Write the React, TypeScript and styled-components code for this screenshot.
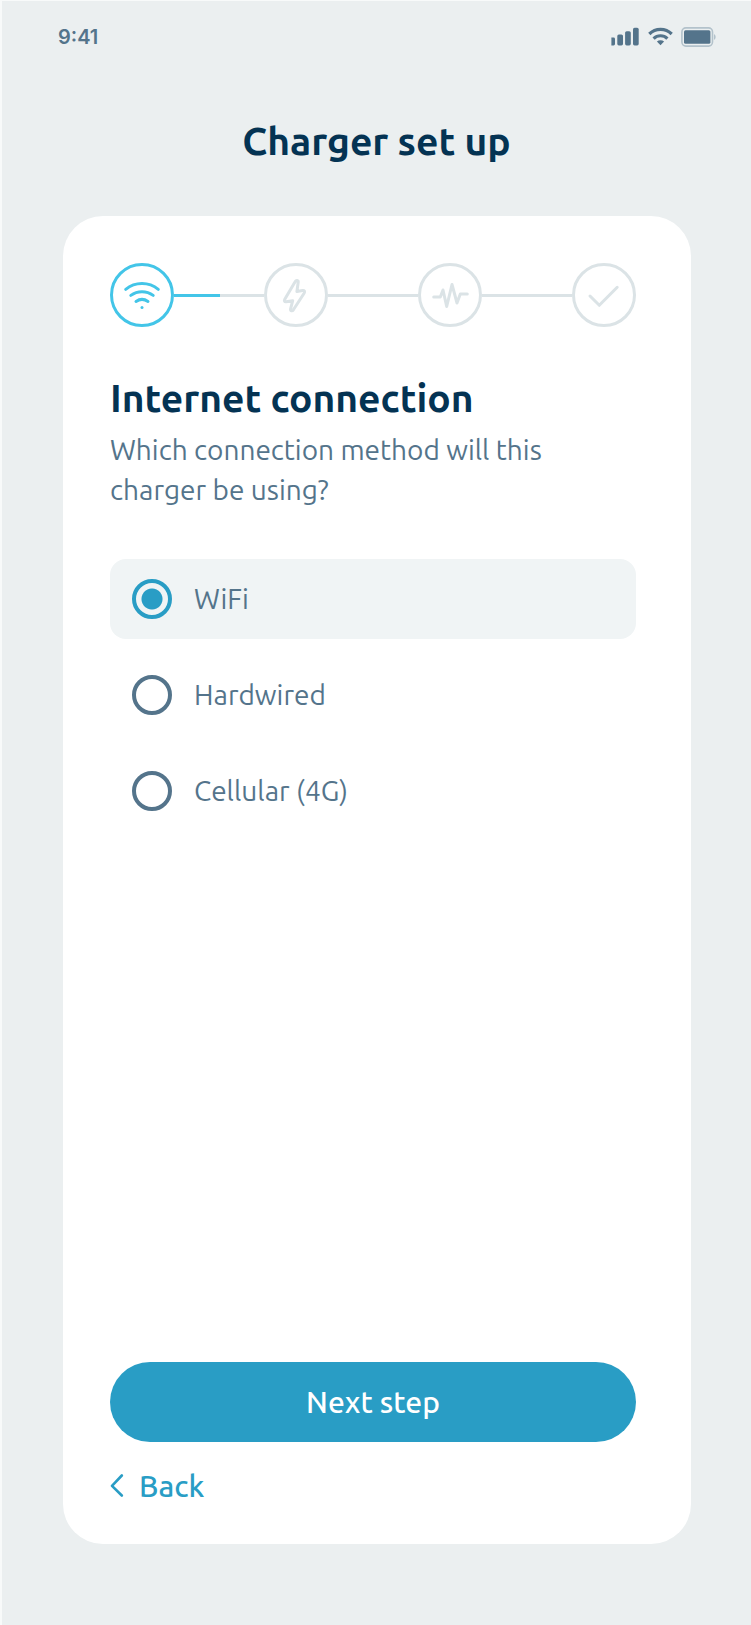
import React, { useState } from 'react';
import styled, { createGlobalStyle } from 'styled-components';

const color = {
  page: '#ebeff0',
  edge: '#f8fafa',
  card: '#ffffff',
  navy: '#043353',
  slate: '#54748b',
  blue: '#299dc5',
  cyan: '#43c5e8',
  line: '#dbe3e6',
  option: '#f0f4f5',
};

const GlobalStyle = createGlobalStyle`
  *, *::before, *::after { box-sizing: border-box; }
  body {
    margin: 0;
    background: ${color.page};
    color: ${color.slate};
    font-family: Ubuntu, "Noto Sans", sans-serif;
  }
`;

const Page = styled.div`
  display: flex;
  flex-direction: column;
  min-height: 100vh;
  padding-bottom: 81px;
  border-top: 1px solid ${color.edge};
  border-left: 2px solid ${color.edge};
`;

const StatusBar = styled.header`
  display: flex;
  align-items: center;
  justify-content: space-between;
  height: 72px;
  padding: 0 34px 0 56px;
`;

const Time = styled.time`
  font-family: Inter, sans-serif;
  font-size: 20px;
  font-weight: 600;
  line-height: 24px;
`;

const StatusIcons = styled.div`
  display: flex;
  align-items: center;
  gap: 8px;

  svg { display: block; }
`;

const Title = styled.h1`
  margin: 44px 0 51px;
  color: ${color.navy};
  font-size: 39px;
  font-weight: 700;
  line-height: 48px;
  text-align: center;
`;

const Card = styled.main`
  display: flex;
  flex: 1;
  flex-direction: column;
  margin: 0 60px 0 61px;
  padding: 47px 55px 38px 47px;
  border-radius: 40px;
  background: ${color.card};
`;

const Stepper = styled.ol`
  display: flex;
  align-items: center;
  margin: 0 0 47px;
  padding: 0;
  list-style: none;
`;

const Step = styled.li<{ $last?: boolean }>`
  display: flex;
  flex: ${(p) => (p.$last ? 'none' : '1 1 0')};
  align-items: center;
`;

const StepCircle = styled.span<{ $active?: boolean }>`
  flex: none;
  width: 64px;
  height: 64px;
  border: 3px solid currentColor;
  border-radius: 50%;
  color: ${(p) => (p.$active ? color.cyan : color.line)};

  svg { display: block; margin: -3px; }
`;

const Connector = styled.span<{ $half?: boolean }>`
  flex: 1;
  height: 3px;
  background: ${(p) =>
    p.$half ? `linear-gradient(90deg, ${color.cyan} 51%, ${color.line} 51%)` : color.line};
`;

const Heading = styled.h2`
  margin: 0 0 8px;
  color: ${color.navy};
  font-size: 39px;
  font-weight: 700;
  line-height: 48px;
`;

const Description = styled.p`
  margin: 0;
  padding-right: 16px;
  font-size: 28px;
  line-height: 40px;
`;

const Options = styled.fieldset`
  display: flex;
  flex-direction: column;
  gap: 16px;
  min-width: 0;
  margin: 49px 0 40px;
  padding: 0;
  border: 0;
`;

const Option = styled.label<{ $selected: boolean }>`
  display: flex;
  align-items: center;
  gap: 22px;
  height: 80px;
  padding: 0 22px;
  border-radius: 16px;
  background: ${(p) => (p.$selected ? color.option : 'transparent')};
  font-size: 28px;
  line-height: 40px;
  cursor: pointer;
`;

const Radio = styled.input`
  appearance: none;
  flex: none;
  width: 40px;
  height: 40px;
  margin: 0;
  border: 4px solid ${color.slate};
  border-radius: 50%;
  cursor: pointer;

  &:checked {
    border-color: ${color.blue};
    background: radial-gradient(circle, ${color.blue} 10px, transparent 11px);
  }
`;

const Actions = styled.div`
  display: flex;
  flex-direction: column;
  align-items: flex-start;
  gap: 24px;
  margin-top: auto;
`;

const NextButton = styled.button`
  width: 100%;
  height: 80px;
  border: 0;
  border-radius: 40px;
  background: ${color.blue};
  color: #ffffff;
  font: 500 30px/40px Ubuntu, "Noto Sans", sans-serif;
  cursor: pointer;
`;

const BackButton = styled.button`
  display: flex;
  align-items: center;
  gap: 14px;
  padding: 0;
  border: 0;
  background: none;
  color: ${color.blue};
  font: 500 30px/40px Ubuntu, "Noto Sans", sans-serif;
  cursor: pointer;
`;

const SignalIcon = () => (
  <svg width="29" height="20" viewBox="0 0 29 20" fill={color.slate} aria-hidden="true">
    <path d="M0.4 10.5H2.6A1.4 1.4 0 0 1 4 11.9V17A1.4 1.4 0 0 1 2.6 18.4H0.4Z" />
    <rect x="6.3" y="7.5" width="5.7" height="10.9" rx="1.6" />
    <rect x="14.1" y="4.2" width="5.7" height="14.2" rx="1.6" />
    <rect x="22" y="0.8" width="5.7" height="17.6" rx="1.6" />
  </svg>
);

const StatusWifiIcon = () => (
  <svg width="25" height="20" viewBox="0 0 25 20" fill="none" stroke={color.slate} strokeWidth="3.2" aria-hidden="true">
    <path d="M1.3 7A15.8 15.8 0 0 1 23.7 7" />
    <path d="M5.6 11.6A9.8 9.8 0 0 1 19.4 11.6" />
    <path d="M12.5 18.2L8.9 14.6A5.2 5.2 0 0 1 16.1 14.6Z" fill={color.slate} stroke="none" />
  </svg>
);

const BatteryIcon = () => (
  <svg width="36" height="20" viewBox="0 0 36 20" aria-hidden="true">
    <rect x="0.9" y="0.9" width="30.6" height="18.2" rx="4" fill="none" stroke="#b3c2cb" strokeWidth="1.6" />
    <rect x="3" y="3.3" width="26.4" height="13.4" rx="1.5" fill={color.slate} />
    <path d="M33 7A3.5 3.5 0 0 1 33 13Z" fill="#b3c2cb" />
  </svg>
);

const StepIcon = ({ children }: { children: React.ReactNode }) => (
  <svg
    width="64"
    height="64"
    viewBox="0 0 64 64"
    fill="none"
    stroke="currentColor"
    strokeWidth="3"
    strokeLinecap="round"
    strokeLinejoin="round"
    aria-hidden="true"
  >
    {children}
  </svg>
);

const steps = [
  {
    name: 'Internet connection',
    icon: (
      <>
        <path d="M15.7 26.3A25.8 25.8 0 0 1 48.3 26.3" />
        <path d="M20.8 32.4A19 19 0 0 1 43.2 32.4" />
        <path d="M26 38.4A10.8 10.8 0 0 1 38 38.4" />
        <circle cx="32" cy="44.5" r="1.5" fill="currentColor" stroke="none" />
      </>
    ),
  },
  {
    name: 'Power',
    icon: (
      <path d="M31.1 18.7L20.8 36.2C19.8 38 20.6 39 22.2 38.7L28.7 37.7L26.6 45.8C26.2 48 28.3 48.4 29.4 46.8L40.1 30.2C41.2 28.3 40.4 27.3 38.6 27.5L32.9 28.4L34.2 19.2C34.4 17.1 32.2 16.7 31.1 18.7Z" />
    ),
  },
  {
    name: 'Signal test',
    icon: <path d="M15.7 34H22.3L25 27L28.7 43.5L34 21.5L39 40L42.3 31H49.3" />,
  },
  { name: 'Done', icon: <path d="M18 33L27.3 42.3L45.2 24.3" /> },
];

const methods = ['WiFi', 'Hardwired', 'Cellular (4G)'];

export default function App() {
  const [method, setMethod] = useState('WiFi');

  return (
    <>
      <GlobalStyle />
      <Page>
        <StatusBar>
          <Time>9:41</Time>
          <StatusIcons>
            <SignalIcon />
            <StatusWifiIcon />
            <BatteryIcon />
          </StatusIcons>
        </StatusBar>
        <Title>Charger set up</Title>
        <Card>
          <Stepper>
            {steps.map((step, i) => (
              <Step key={step.name} $last={i === steps.length - 1} aria-label={step.name} aria-current={i === 0 ? 'step' : undefined}>
                <StepCircle $active={i === 0}>
                  <StepIcon>{step.icon}</StepIcon>
                </StepCircle>
                {i < steps.length - 1 && <Connector $half={i === 0} />}
              </Step>
            ))}
          </Stepper>
          <Heading id="method-heading">Internet connection</Heading>
          <Description>Which connection method will this charger be using?</Description>
          <Options aria-labelledby="method-heading">
            {methods.map((name) => (
              <Option key={name} $selected={name === method}>
                <Radio type="radio" name="method" value={name} checked={name === method} onChange={() => setMethod(name)} />
                {name}
              </Option>
            ))}
          </Options>
          <Actions>
            <NextButton type="button">Next step</NextButton>
            <BackButton type="button">
              <svg width="15" height="24" viewBox="0 0 15 24" fill="none" stroke="currentColor" strokeWidth="2.6" strokeLinecap="round" strokeLinejoin="round" aria-hidden="true">
                <path d="M11.8 1.5L2 11.8L11.8 21.5" />
              </svg>
              Back
            </BackButton>
          </Actions>
        </Card>
      </Page>
    </>
  );
}
